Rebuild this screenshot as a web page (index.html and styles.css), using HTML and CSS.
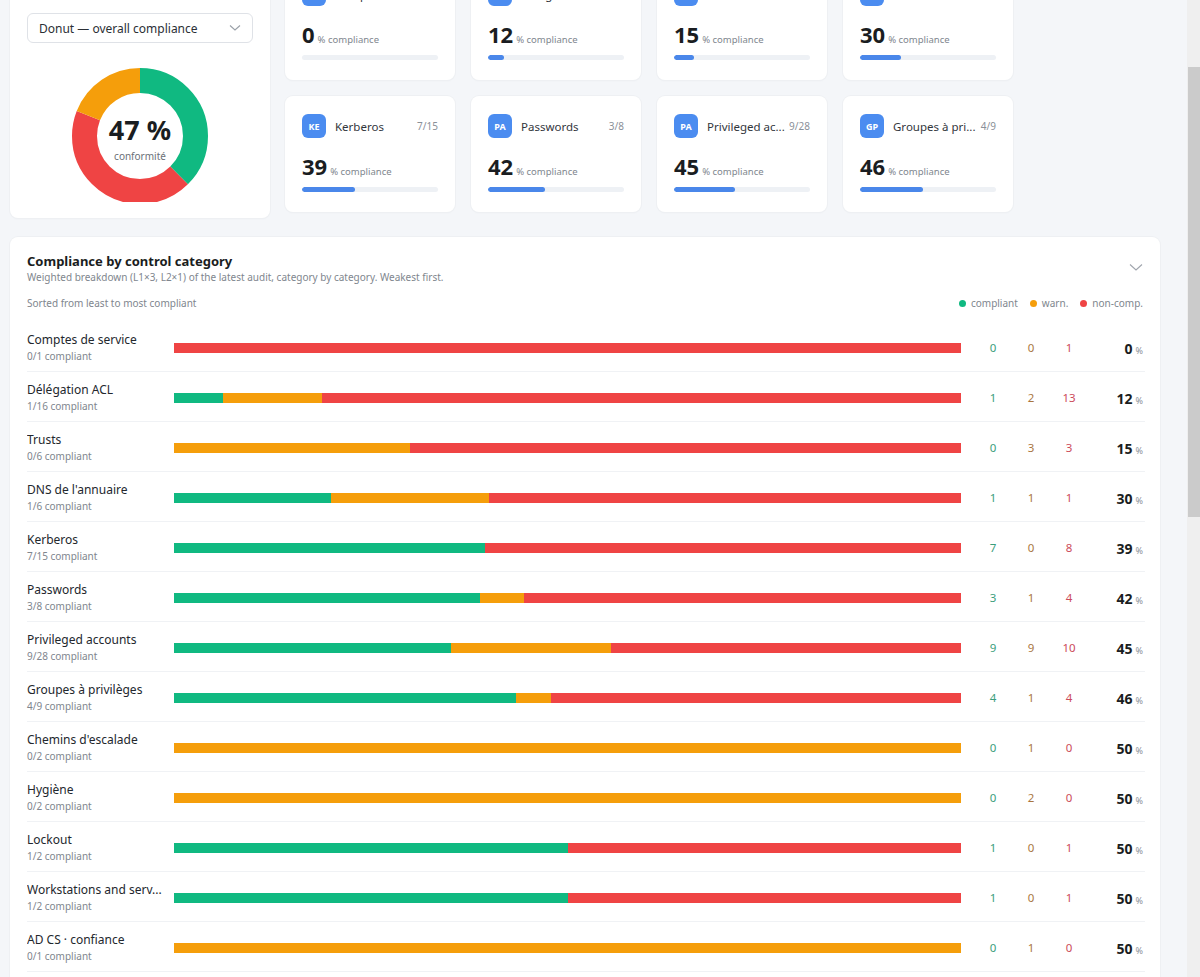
FILE: index.html
```html
<!DOCTYPE html>
<html lang="en">
<head>
<meta charset="utf-8">
<title>Compliance</title>
<link rel="stylesheet" href="styles.css">
</head>
<body>
<div class="page">
  <div class="top">
    <div class="card overall">
      <div class="overall-title">Overall compliance</div>
      <div class="select">
        <span>Donut — overall compliance</span>
        <svg class="chev" width="12" height="8" viewBox="0 0 12 8"><path d="M1 1.5 L6 6 L11 1.5" fill="none" stroke="#9aa0a8" stroke-width="1.1"/></svg>
      </div>
      <div class="donut-wrap">
        <div class="donut">
          <svg width="136" height="136" viewBox="0 0 136 136">
            <g transform="rotate(-90 68 68)">
              <circle cx="68" cy="68" r="55.5" fill="none" stroke="#10b981" stroke-width="25" stroke-dasharray="130.8 348.7" stroke-dashoffset="0"/>
              <circle cx="68" cy="68" r="55.5" fill="none" stroke="#ef4444" stroke-width="25" stroke-dasharray="151.1 348.7" stroke-dashoffset="-130.8"/>
              <circle cx="68" cy="68" r="55.5" fill="none" stroke="#f59e0b" stroke-width="25" stroke-dasharray="66.8 348.7" stroke-dashoffset="-281.9"/>
            </g>
          </svg>
          <div class="donut-center">
            <div class="donut-val">47 %</div>
            <div class="donut-lbl">conformité</div>
          </div>
        </div>
      </div>
    </div>
    <div class="cards">
      <div class="card cat"><div class="cat-head"><span class="badge">CO</span><span class="cat-name">Comptes de...</span><span class="cat-count">0/1</span></div><div class="cat-val"><b>0</b><span>% compliance</span></div><div class="track"><div class="fill" style="width:0%"></div></div></div>
      <div class="card cat"><div class="cat-head"><span class="badge">DA</span><span class="cat-name">Délégation...</span><span class="cat-count">1/16</span></div><div class="cat-val"><b>12</b><span>% compliance</span></div><div class="track"><div class="fill" style="width:12%"></div></div></div>
      <div class="card cat"><div class="cat-head"><span class="badge">TR</span><span class="cat-name">Trusts</span><span class="cat-count">0/6</span></div><div class="cat-val"><b>15</b><span>% compliance</span></div><div class="track"><div class="fill" style="width:15%"></div></div></div>
      <div class="card cat"><div class="cat-head"><span class="badge">DN</span><span class="cat-name">DNS de l'a...</span><span class="cat-count">1/6</span></div><div class="cat-val"><b>30</b><span>% compliance</span></div><div class="track"><div class="fill" style="width:30%"></div></div></div>
      <div class="card cat"><div class="cat-head"><span class="badge">KE</span><span class="cat-name">Kerberos</span><span class="cat-count">7/15</span></div><div class="cat-val"><b>39</b><span>% compliance</span></div><div class="track"><div class="fill" style="width:39%"></div></div></div>
      <div class="card cat"><div class="cat-head"><span class="badge">PA</span><span class="cat-name">Passwords</span><span class="cat-count">3/8</span></div><div class="cat-val"><b>42</b><span>% compliance</span></div><div class="track"><div class="fill" style="width:42%"></div></div></div>
      <div class="card cat"><div class="cat-head"><span class="badge">PA</span><span class="cat-name">Privileged ac...</span><span class="cat-count">9/28</span></div><div class="cat-val"><b>45</b><span>% compliance</span></div><div class="track"><div class="fill" style="width:45%"></div></div></div>
      <div class="card cat"><div class="cat-head"><span class="badge">GP</span><span class="cat-name">Groupes à pri...</span><span class="cat-count">4/9</span></div><div class="cat-val"><b>46</b><span>% compliance</span></div><div class="track"><div class="fill" style="width:46%"></div></div></div>
    </div>
  </div>

  <div class="card section">
    <div class="sec-head">
      <div>
        <div class="sec-title">Compliance by control category</div>
        <div class="sec-sub">Weighted breakdown (L1×3, L2×1) of the latest audit, category by category. Weakest first.</div>
      </div>
      <svg class="sec-chev" width="14" height="9" viewBox="0 0 14 9"><path d="M1 1.5 L7 7 L13 1.5" fill="none" stroke="#a0a5ad" stroke-width="1.1"/></svg>
    </div>
    <div class="sort-line">
      <span>Sorted from least to most compliant</span>
      <div class="legend">
        <span class="lg"><i class="dot g"></i>compliant</span>
        <span class="lg"><i class="dot o"></i>warn.</span>
        <span class="lg"><i class="dot r"></i>non-comp.</span>
      </div>
    </div>
    <div class="rows">
      <div class="row"><div class="lab"><div class="nm">Comptes de service</div><div class="sb">0/1 compliant</div></div><div class="bar"><i class="r" style="width:100%"></i></div><span class="n g">0</span><span class="n o">0</span><span class="n r">1</span><div class="pct"><b>0</b>%</div></div>
      <div class="row"><div class="lab"><div class="nm">Délégation ACL</div><div class="sb">1/16 compliant</div></div><div class="bar"><i class="g" style="width:6.25%"></i><i class="o" style="width:12.5%"></i><i class="r" style="width:81.25%"></i></div><span class="n g">1</span><span class="n o">2</span><span class="n r">13</span><div class="pct"><b>12</b>%</div></div>
      <div class="row"><div class="lab"><div class="nm">Trusts</div><div class="sb">0/6 compliant</div></div><div class="bar"><i class="o" style="width:30%"></i><i class="r" style="width:70%"></i></div><span class="n g">0</span><span class="n o">3</span><span class="n r">3</span><div class="pct"><b>15</b>%</div></div>
      <div class="row"><div class="lab"><div class="nm">DNS de l'annuaire</div><div class="sb">1/6 compliant</div></div><div class="bar"><i class="g" style="width:20%"></i><i class="o" style="width:20%"></i><i class="r" style="width:60%"></i></div><span class="n g">1</span><span class="n o">1</span><span class="n r">1</span><div class="pct"><b>30</b>%</div></div>
      <div class="row"><div class="lab"><div class="nm">Kerberos</div><div class="sb">7/15 compliant</div></div><div class="bar"><i class="g" style="width:39.5%"></i><i class="r" style="width:60.5%"></i></div><span class="n g">7</span><span class="n o">0</span><span class="n r">8</span><div class="pct"><b>39</b>%</div></div>
      <div class="row"><div class="lab"><div class="nm">Passwords</div><div class="sb">3/8 compliant</div></div><div class="bar"><i class="g" style="width:38.9%"></i><i class="o" style="width:5.6%"></i><i class="r" style="width:55.5%"></i></div><span class="n g">3</span><span class="n o">1</span><span class="n r">4</span><div class="pct"><b>42</b>%</div></div>
      <div class="row"><div class="lab"><div class="nm">Privileged accounts</div><div class="sb">9/28 compliant</div></div><div class="bar"><i class="g" style="width:35.2%"></i><i class="o" style="width:20.3%"></i><i class="r" style="width:44.5%"></i></div><span class="n g">9</span><span class="n o">9</span><span class="n r">10</span><div class="pct"><b>45</b>%</div></div>
      <div class="row"><div class="lab"><div class="nm">Groupes à privilèges</div><div class="sb">4/9 compliant</div></div><div class="bar"><i class="g" style="width:43.5%"></i><i class="o" style="width:4.4%"></i><i class="r" style="width:52.1%"></i></div><span class="n g">4</span><span class="n o">1</span><span class="n r">4</span><div class="pct"><b>46</b>%</div></div>
      <div class="row"><div class="lab"><div class="nm">Chemins d'escalade</div><div class="sb">0/2 compliant</div></div><div class="bar"><i class="o" style="width:100%"></i></div><span class="n g">0</span><span class="n o">1</span><span class="n r">0</span><div class="pct"><b>50</b>%</div></div>
      <div class="row"><div class="lab"><div class="nm">Hygiène</div><div class="sb">0/2 compliant</div></div><div class="bar"><i class="o" style="width:100%"></i></div><span class="n g">0</span><span class="n o">2</span><span class="n r">0</span><div class="pct"><b>50</b>%</div></div>
      <div class="row"><div class="lab"><div class="nm">Lockout</div><div class="sb">1/2 compliant</div></div><div class="bar"><i class="g" style="width:50%"></i><i class="r" style="width:50%"></i></div><span class="n g">1</span><span class="n o">0</span><span class="n r">1</span><div class="pct"><b>50</b>%</div></div>
      <div class="row"><div class="lab"><div class="nm">Workstations and serv...</div><div class="sb">1/2 compliant</div></div><div class="bar"><i class="g" style="width:50%"></i><i class="r" style="width:50%"></i></div><span class="n g">1</span><span class="n o">0</span><span class="n r">1</span><div class="pct"><b>50</b>%</div></div>
      <div class="row"><div class="lab"><div class="nm">AD CS · confiance</div><div class="sb">0/1 compliant</div></div><div class="bar"><i class="o" style="width:100%"></i></div><span class="n g">0</span><span class="n o">1</span><span class="n r">0</span><div class="pct"><b>50</b>%</div></div>
      <div class="row"><div class="lab"><div class="nm">Sauvegarde</div><div class="sb">1/1 compliant</div></div><div class="bar"><i class="g" style="width:100%"></i></div><span class="n g">1</span><span class="n o">0</span><span class="n r">0</span><div class="pct"><b>100</b>%</div></div>
    </div>
  </div>
</div>
<div class="scrollbar"><div class="thumb"></div></div>
</body>
</html>
```
FILE: styles.css
```css
html, body {
  margin: 0;
  padding: 0;
  height: 100%;
  overflow: hidden;
}
body {
  background: #f4f6f9;
  font-family: "Noto Sans", "Open Sans", sans-serif;
  color: #1f2328;
}
.page {
  width: 1150px;
  padding-left: 10px;
  margin-top: -36px;
}
.top {
  display: flex;
  align-items: flex-start;
  gap: 15px;
}
.card {
  background: #fff;
  border-radius: 8px;
  box-shadow: 0 0 0 1px #eef0f3, 0 1px 2px rgba(20, 30, 50, 0.04);
}
.overall {
  width: 226px;
  padding: 17px 17px 16px;
}
.overall-title {
  font-size: 14px;
  font-weight: 700;
  line-height: 20px;
  height: 20px;
  margin-bottom: 12px;
}
.select {
  height: 28px;
  border: 1px solid #dfe2e7;
  border-radius: 6px;
  display: flex;
  align-items: center;
  justify-content: space-between;
  padding: 0 11px 0 11px;
  font-size: 12px;
  color: #2b2f35;
}
.chev { display: block; }
.donut-wrap {
  margin-top: 25px;
  height: 134px;
  overflow: hidden;
  display: flex;
  justify-content: center;
}
.donut {
  position: relative;
  width: 136px;
  height: 136px;
  flex: none;
}
.donut svg { display: block; }
.donut-center {
  position: absolute;
  inset: 0;
  display: flex;
  flex-direction: column;
  align-items: center;
  justify-content: center;
  padding-top: 6px;
}
.donut-val {
  font-size: 27px;
  font-weight: 700;
  line-height: 30px;
  color: #1a1d21;
}
.donut-lbl {
  font-size: 10px;
  color: #6b7078;
  line-height: 14px;
  margin-top: 4px;
}
.cards {
  display: grid;
  grid-template-columns: repeat(4, 170px);
  gap: 16px;
}
.cat {
  height: 116px;
  box-sizing: border-box;
  padding: 18px 17px 0;
}
.cat-head {
  display: flex;
  align-items: center;
  height: 24px;
}
.badge {
  width: 24px;
  height: 24px;
  border-radius: 6px;
  background: #4b8cf0;
  color: #fff;
  font-size: 9px;
  font-weight: 700;
  display: flex;
  align-items: center;
  justify-content: center;
  flex: none;
}
.cat-name {
  margin-left: 9px;
  font-size: 11.5px;
  color: #32363c;
  flex: 1;
  min-width: 0;
  white-space: nowrap;
  overflow: hidden;
}
.cat-count {
  font-size: 10px;
  color: #8a9098;
  margin-left: 3px;
  flex: none;
}
.cat-val {
  margin-top: 13px;
  height: 30px;
  display: flex;
  align-items: baseline;
  line-height: 30px;
}
.cat-val b {
  font-size: 22px;
  font-weight: 700;
  color: #1a1d21;
}
.cat-val span {
  font-size: 9.5px;
  color: #80868e;
  margin-left: 3px;
}
.track {
  margin-top: 6px;
  height: 5px;
  border-radius: 3px;
  background: #eef1f5;
  overflow: hidden;
}
.fill {
  height: 100%;
  background: #4a87ea;
  border-radius: 3px;
}
.section {
  margin-top: 19px;
  padding: 15px 17px 0;
}
.sec-head {
  display: flex;
  justify-content: space-between;
  align-items: flex-start;
}
.sec-title {
  font-size: 13px;
  font-weight: 700;
  line-height: 18px;
  color: #1a1d21;
}
.sec-sub {
  font-size: 10px;
  line-height: 14px;
  color: #80868e;
}
.sec-chev {
  margin-top: 11px;
}
.sort-line {
  margin-top: 12px;
  display: flex;
  justify-content: space-between;
  align-items: center;
  font-size: 10px;
  line-height: 14px;
  color: #80868e;
}
.legend {
  display: flex;
  gap: 12px;
}
.lg {
  display: flex;
  align-items: center;
  gap: 5px;
}
.dot {
  width: 7px;
  height: 7px;
  border-radius: 50%;
  display: inline-block;
}
.dot.g { background: #10b981; }
.dot.o { background: #f59e0b; }
.dot.r { background: #ef4444; }
.rows {
  margin-top: 12px;
  margin-right: -2px;
}
.row {
  display: grid;
  grid-template-columns: 147px 787px 13px 38px 38px 38px 57px;
  grid-template-areas: "lab bar . g o r pct";
  align-items: center;
  height: 50px;
  box-sizing: border-box;
  padding-top: 1px;
  border-bottom: 1px solid #f0f2f5;
}
.lab {
  grid-area: lab;
  min-width: 0;
  padding-right: 10px;
}
.nm {
  font-size: 12px;
  line-height: 16px;
  color: #23272d;
  white-space: nowrap;
  overflow: hidden;
}
.sb {
  font-size: 10px;
  line-height: 14px;
  color: #80868e;
  margin-top: 1px;
}
.bar {
  grid-area: bar;
  display: flex;
  height: 10px;
  margin-top: 1px;
}
.bar i { display: block; height: 100%; }
.bar i.g { background: #10b981; }
.bar i.o { background: #f59e0b; }
.bar i.r { background: #ef4444; }
.n {
  font-size: 11.5px;
  text-align: center;
  margin-top: 1px;
}
.n.g { grid-area: g; color: #3b9e7c; }
.n.o { grid-area: o; color: #a9763f; }
.n.r { grid-area: r; color: #cc4b5a; }
.pct {
  grid-area: pct;
  text-align: right;
  font-size: 9px;
  color: #8a9098;
  padding-right: 2px;
  margin-top: 2px;
}
.pct b {
  font-size: 14px;
  font-weight: 700;
  color: #1a1d21;
  margin-right: 3px;
}
.scrollbar {
  position: fixed;
  top: 0;
  right: 0;
  width: 13px;
  height: 100%;
  background: #efefef;
}
.thumb {
  margin-top: 67px;
  height: 450px;
  margin-left: 1px;
  background: #cbcbcb;
}
```
